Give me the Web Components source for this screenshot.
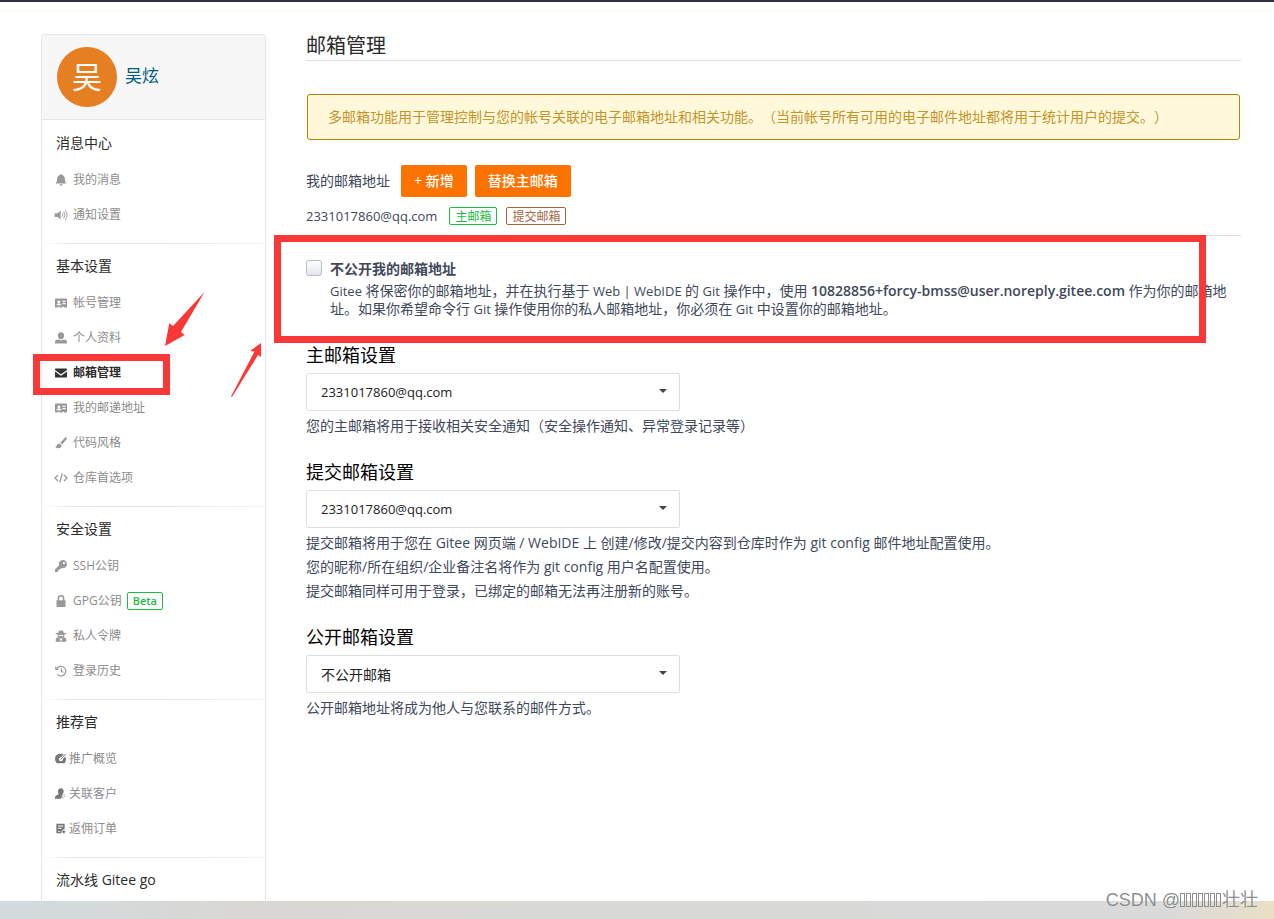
<!DOCTYPE html>
<html lang="zh-CN">
<head>
<meta charset="utf-8">
<title>邮箱管理</title>
<style>
html{height:100%}
body{margin:0;min-height:100%;background:#fff;font-family:"Open Sans","Noto Sans CJK SC",sans-serif;font-size:14px;line-height:18px;color:#40485b;text-spacing-trim:space-all}
</style>
</head>
<body>
<settings-page></settings-page>
<script>
function define(name, html, setup) {
  const tpl = document.createElement('template');
  tpl.innerHTML = html;
  customElements.define(name, class extends HTMLElement {
    connectedCallback() {
      if (this.shadowRoot) return;
      const root = this.attachShadow({ mode: 'open' });
      root.appendChild(tpl.content.cloneNode(true));
      if (setup) setup(this, root);
    }
  });
}

const ICONS = {
  bell: '<path d="M8 0c.8 0 1.200.5 1.200 1.200C12 1.800 13.200 4 13.200 6.500c0 3 .8 4.500 2.300 6H.5c1.500-1.500 2.300-3 2.300-6C2.800 4 4 1.800 6.800 1.200 6.800.5 7.200 0 8 0zM6 13.500h4a2 2 0 0 1-4 0z"/>',
  volume: '<path d="M-.5 5.500H3.500L7.500 2v12l-4-3.500H-.5z"/><path d="M9.500 5.500q2 2.500 0 5M11.500 3.500q4 4.500 0 9M13.500 1.500q5.400 6.500 0 13" fill="none" stroke="currentColor" stroke-width="1.200"/>',
  card: '<path fill-rule="evenodd" d="M1 2h14q1 0 1 1v10q0 1-1 1h-3v-1h-2v1H6v-1H4v1H1q-1 0-1-1V3q0-1 1-1zM5.200 4.500a1.900 1.900 0 1 0 0 3.800 1.900 1.900 0 0 0 0-3.800zM2 11h6.500q0-2.300-1.800-2.300H3.800Q2 8.700 2 11zM10 5v1.500h4V5zm0 3v1.500h4V8z"/>',
  user: '<path d="M8 .3c2.700 0 4.200 1.800 4.200 4.400S10.500 9.800 8 9.800 3.800 7.400 3.800 4.700 5.300.3 8 .3zM0 15.200v-2Q.2 10.500 4.300 10q3.700 2 7.400 0 4.100.5 4.300 3.200v2z"/>',
  mail: '<path d="M1 2h14q1 0 1 1v1L8 9.500 0 4V3q0-1 1-1zM0 6l8 5.500L16 6v7q0 1-1 1H1q-1 0-1-1z"/>',
  brush: '<path d="M15.500.5q.8.800 0 2.200L9.800 10 7 7.500l6.600-6.700q1.100-.9 1.900-.3zM6 8.500 8.800 11Q8.500 15 4.500 15 1.500 15.300 0 12.800q2 .3 2.600-1.700.8-2.500 3.400-2.600z"/>',
  code: '<path d="M4 4 0 8l4 4M12 4l4 4-4 4M9.700 2l-3.400 12" fill="none" stroke="currentColor" stroke-width="1.700"/>',
  key: '<path fill-rule="evenodd" d="M10.500 0A5.500 5.500 0 1 1 9 10.800L7.500 12H6v1.800H4V16H0v-3.500l5.300-5.300A5.500 5.500 0 0 1 10.500 0zm1.300 2.700a1.500 1.500 0 1 0 0 3 1.500 1.500 0 0 0 0-3z"/>',
  lock: '<path fill-rule="evenodd" d="M3.500 7V4.500a4.500 4.500 0 0 1 9 0V7H14v9H2V7zm2 0h5V4.500a2.500 2.500 0 0 0-5 0z"/>',
  spy: '<path fill-rule="evenodd" d="M5.500.5 8 1l2.500-.5 1.300 3.500H15v1.500h-2.500v2.500q-.3 1.500-1.500 2H13q2 .5 2 2.500v3H1v-3q0-2 2-2.500h2q-1.200-.5-1.500-2V5.500H1V4h3.200zM5 6.500V8h2.500l.5-.8.500.8H11V6.500zM6 11l1 4 1-2 1 2 1-4-2 .8z"/>',
  history: '<path d="M2.500 4.500A6.500 6.500 0 1 1 3 12.500M8.500 4.500v4l2.500 1.500" fill="none" stroke="currentColor" stroke-width="1.600"/><path d="M0 1.500 5.500 6.500H.5z"/>',
  gauge: '<path fill-rule="evenodd" d="M8.500 1q2.400 0 4.200 1.200L8.500 6a3 3 0 1 0 3 3L14.500 5Q16 7 16 9q0 3.500-2 6H2.500Q0 12 0 9 0 1 8.500 1z"/><path d="m8 9.500 7.500-8" stroke="currentColor" stroke-width="1.400"/>',
  client: '<path d="M8.500.3c2.800 0 4.200 1.900 4.200 4.500 0 1.700-.8 3.600-2 4.500L9 15.500H0v-2q.2-2.700 3.700-3.300 2-.2 1.300-1.700Q4.300 7 4.300 4.800C4.300 2.200 5.800.3 8.500.3z"/><path d="m10.500 12.500 2-2.500q2-.8 2.500 1l-2 2.500-2 1.500z" fill="none" stroke="currentColor" opacity=".6"/>',
  order: '<path fill-rule="evenodd" d="M2 1h12v8.500h-2.500l-2 3V15H2zM4.500 3.500V5H12V3.500zm0 3.500v1.500h5V7zM4.500 12v1h3v-1z"/><path d="m12.700 10 .8 1.800 2 .3-1.500 1.300.4 2-1.700-1-1.700 1 .4-2-1.500-1.300 2-.3z"/>'
};
define('ui-icon', `<style>:host{display:block;width:12px;height:12px;flex:none}svg{display:block;width:100%;height:100%;overflow:visible}</style><svg viewBox="0 0 16 16" fill="currentColor" aria-hidden="true"></svg>`,
  (el, root) => { root.querySelector('svg').innerHTML = ICONS[el.getAttribute('name')] || ''; });

define('ui-tag', `<style>
:host{display:inline-block;box-sizing:border-box;height:18px;padding:0 5px;border:1px solid #21ba45;border-radius:2px;color:#21ba45;font-size:12px;line-height:17px;white-space:nowrap}
:host([tone=brown]){border-color:#a5673f;color:#a5673f}
:host([strong]){font-size:11px;font-weight:600;line-height:16px}
</style><slot></slot>`);

define('ui-button', `<style>
:host{display:block}
button{display:block;height:32px;margin:0;padding:0 13px;border:0;border-radius:2px;background:#fe7300;color:#fff;font:500 14px/32px "Open Sans","Noto Sans CJK SC",sans-serif;white-space:nowrap}
</style><button type="button"><slot></slot></button>`);

define('nav-group', `<style>
:host{display:block;padding:5px 0 11px;border-top:1px solid;border-image:linear-gradient(90deg,#fff,#e3e5e7 15%,#e9ebec 70%,#f5f5f6) 1}
:host([first]){border-image:none;border-color:transparent}
:host([last]){padding-bottom:2px}
h2{margin:0 14px 2px;font-size:14px;font-weight:400;line-height:34px;color:#2b2b2b}
</style><h2><slot name="title"></slot></h2><nav><slot></slot></nav>`);

define('nav-item', `<style>
:host{display:block}
a{display:flex;align-items:center;height:35px;padding:0 13px;color:#8c8c8c;font-size:12px;text-decoration:none}
ui-icon{margin-right:6px;color:#999}
:host([compact]) ui-icon{width:11px;height:11px;margin-right:3px;color:#777}
:host([active]) a{color:#2b2b2b;font-weight:600}
:host([active]) ui-icon{color:#333}
::slotted(ui-tag){margin-left:5px}
</style><a href="#"><ui-icon></ui-icon><slot></slot></a>`,
  (el, root) => {
    const old = root.querySelector('ui-icon'), icon = document.createElement('ui-icon');
    icon.setAttribute('name', el.getAttribute('icon'));
    old.replaceWith(icon);
  });

define('side-bar', `<style>
:host{display:block;box-sizing:border-box;width:225px;flex:none;border:1px solid #e1e7ec;border-bottom:0;border-radius:4px 4px 0 0;overflow:hidden}
header{display:flex;align-items:center;gap:8px;padding:12px 15px;background:#f7f7f8;border-bottom:1px solid #e1e7ec}
.avatar{width:60px;height:60px;border-radius:50%;background:#e67e22;color:#fff;font-size:30px;line-height:60px;text-align:center}
header a{padding-bottom:3px;color:#005980;font-size:17px;line-height:24px;text-decoration:none}
</style>
<header><div class="avatar">吴</div><a href="#">吴炫</a></header>
<nav-group first><span slot="title">消息中心</span>
<nav-item icon="bell">我的消息</nav-item><nav-item icon="volume">通知设置</nav-item></nav-group>
<nav-group><span slot="title">基本设置</span>
<nav-item icon="card">帐号管理</nav-item><nav-item icon="user">个人资料</nav-item><nav-item icon="mail" active>邮箱管理</nav-item><nav-item icon="card">我的邮递地址</nav-item><nav-item icon="brush">代码风格</nav-item><nav-item icon="code">仓库首选项</nav-item></nav-group>
<nav-group><span slot="title">安全设置</span>
<nav-item icon="key">SSH公钥</nav-item><nav-item icon="lock">GPG公钥<ui-tag strong>Beta</ui-tag></nav-item><nav-item icon="spy">私人令牌</nav-item><nav-item icon="history">登录历史</nav-item></nav-group>
<nav-group><span slot="title">推荐官</span>
<nav-item compact icon="gauge">推广概览</nav-item><nav-item compact icon="client">关联客户</nav-item><nav-item compact icon="order">返佣订单</nav-item></nav-group>
<nav-group last><span slot="title">流水线 Gitee go</span></nav-group>`);

define('mail-select', `<style>
:host{display:block;margin-bottom:22px}
label{display:block;margin-bottom:6px;color:#000;font-size:18px;line-height:24px}
.field{position:relative;max-width:374px}
select{display:block;appearance:none;box-sizing:border-box;width:100%;height:38px;margin:0;padding:0 32px 0 14px;border:1px solid #dce0e6;border-radius:2px;background:#fff;color:#222;font:14px "Open Sans","Noto Sans CJK SC",sans-serif}
:host([latin]) select{font-size:13px}
.field::after{content:"";position:absolute;right:13px;top:16px;border:4px solid transparent;border-top-color:#444;border-bottom:0;pointer-events:none}
.help{margin-top:3px;line-height:24px}
</style><label for="s"></label><div class="field"><select id="s"><option></option></select></div><div class="help"><slot></slot></div>`,
  (el, root) => {
    root.querySelector('label').textContent = el.getAttribute('label');
    root.querySelector('option').textContent = el.getAttribute('value');
  });

define('privacy-option', `<style>
:host{display:flex;gap:8px;padding:24px 12px 25px 0}
input{appearance:none;box-sizing:border-box;flex:none;width:16px;height:16px;margin:0;border:1px solid #b9bec6;border-radius:3px;background:linear-gradient(#fff,#e4e6ea)}
label{display:block;margin-bottom:4px;font-weight:600}
p{margin:0;font-family:Roboto,"Noto Sans CJK SC",sans-serif}
small,b{font-family:"Open Sans",sans-serif;line-height:1}
small{font-size:13px}
b{font-size:14px;font-weight:600}
</style><input type="checkbox" id="c"><div><label for="c">不公开我的邮箱地址</label>
<p><small>Gitee</small> 将保密你的邮箱地址，并在执行基于 <small>Web | WebIDE</small> 的 <small>Git</small> 操作中，使用 <b>10828856+forcy-bmss@user.noreply.gitee.com</b> 作为你的邮箱地<wbr>址。如果你希望命令行 <small>Git</small> 操作使用你的私人邮箱地址，你必须在 <small>Git</small> 中设置你的邮箱地址。</p></div>`);

define('mail-settings', `<style>
:host{display:block;flex:1;min-width:0}
h1{margin:0 0 33px;padding-bottom:2px;border-bottom:1px solid #e0e0e0;color:#2b2b2b;font-size:20px;font-weight:400;line-height:24px}
.notice{margin:0 1px 25px;padding:13px 20px;border:1px solid #b58105;border-radius:3px;background:#fff8db;color:#c2942a;line-height:18px}
.actions{display:flex;align-items:center;gap:8px;margin-bottom:10px}
.actions span{margin-right:3px}
.mail{display:flex;align-items:center;gap:9px;padding-bottom:10px;border-bottom:1px solid #dcdde0}
.mail small{margin-right:3px;font-size:13px}
</style>
<h1>邮箱管理</h1>
<div class="notice">多邮箱功能用于管理控制与您的帐号关联的电子邮箱地址和相关功能。（当前帐号所有可用的电子邮件地址都将用于统计用户的提交。）</div>
<div class="actions"><span>我的邮箱地址</span><ui-button>+ 新增</ui-button><ui-button>替换主邮箱</ui-button></div>
<div class="mail"><small>2331017860@qq.com</small><ui-tag>主邮箱</ui-tag><ui-tag tone="brown">提交邮箱</ui-tag></div>
<privacy-option></privacy-option>
<mail-select latin label="主邮箱设置" value="2331017860@qq.com">您的主邮箱将用于接收相关安全通知（安全操作通知、异常登录记录等）</mail-select>
<mail-select latin label="提交邮箱设置" value="2331017860@qq.com">提交邮箱将用于您在 Gitee 网页端 / WebIDE 上 创建/修改/提交内容到仓库时作为 git config 邮件地址配置使用。<br>您的昵称/所在组织/企业备注名将作为 git config 用户名配置使用。<br>提交邮箱同样可用于登录，已绑定的邮箱无法再注册新的账号。</mail-select>
<mail-select label="公开邮箱设置" value="不公开邮箱">公开邮箱地址将成为他人与您联系的邮件方式。</mail-select>`);

define('mark-up', `<style>
:host{position:absolute;inset:-2px 0 0;pointer-events:none}
i{position:absolute;box-sizing:border-box;border:7px solid #fb3838}
.menu{left:33px;top:354px;width:137px;height:41px}
.option{left:274px;right:68px;top:235px;height:108px}
svg{position:absolute;left:160px;top:285px}
</style><i class="menu"></i><i class="option"></i>
<svg width="110" height="120" viewBox="160 285 110 120" fill="#fb3838"><path d="M204.500 292 181 332l3.700 3L165 346l4.300-22.700 3.700 2.700z"/><path d="M231 396.500 232 397 258 355l3 2v-14l-11 8 4.500.5z"/></svg>`);

define('water-mark', `<style>
:host{position:absolute;right:16px;bottom:7px;display:flex;align-items:center;color:#8f8f8f;font:18px/24px "Liberation Sans","Noto Sans CJK SC",sans-serif;text-shadow:-1px -1px 0 #fff8;white-space:pre}
i{box-sizing:border-box;width:5px;height:14px;margin-right:1px;border:1px solid #8f8f8f}
</style><span>CSDN @</span><i></i><i></i><i></i><i></i><i></i><i></i><i></i><span>壮壮</span>`);

define('settings-page', `<style>
:host{position:relative;display:flex;flex-direction:column;min-height:100vh;box-sizing:border-box;border-top:2px solid #2f3142}
main{display:flex;align-items:stretch;gap:40px;padding:32px 33px 0 41px}
footer{flex:1;min-height:18px;background:linear-gradient(90deg,#d2dadd,#d9d7d3 20%,#d8d9d7 60%,#dadada 92%,#eadfc5)}
</style><main><side-bar></side-bar><mail-settings></mail-settings></main><footer></footer><mark-up></mark-up><water-mark></water-mark>`);
</script>
</body>
</html>
